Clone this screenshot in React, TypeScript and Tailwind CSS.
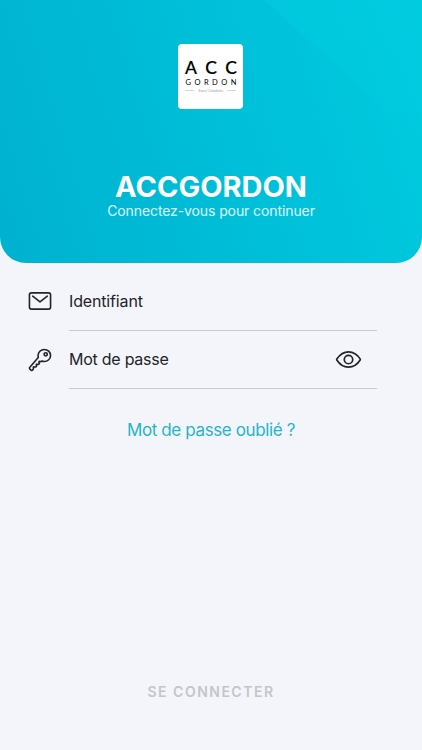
import React from 'react';
import { IoEyeOutline, IoKeyOutline, IoMailOutline } from 'react-icons/io5';

const Logo: React.FC = () => (
  <div className="flex h-[65px] w-[65px] flex-col items-center rounded-[4px] bg-white pt-[13px] text-black">
    <div className="flex h-[22px] w-[52px] items-center justify-between font-['Lato'] text-[17.5px] leading-[22px] font-medium">
      <span className="[-webkit-text-stroke:0.2px_black]">A</span>
      <span className="[-webkit-text-stroke:0.2px_black]">C</span>
      <span className="[-webkit-text-stroke:0.2px_black]">C</span>
    </div>
    <div className="flex w-[51px] justify-between font-['Lato'] text-[7.5px] leading-[8px]">
      {'GORDON'.split('').map((letter, i) => (
        <span key={i}>{letter}</span>
      ))}
    </div>
    <div className="mt-px flex w-[51px] items-center justify-between font-['Lato'] text-[3.8px] leading-[5px] text-gray-400">
      <span className="h-px w-[9px] bg-gray-300" />
      <span>Excel Conduite</span>
      <span className="h-px w-[9px] bg-gray-300" />
    </div>
  </div>
);

const App: React.FC = () => {
  return (
    <div className="flex h-[750px] w-full flex-col bg-[#f3f5fa] font-['Inter',sans-serif] text-[#222428]">
      {/* Header */}
      <header className="relative flex h-[263px] flex-col items-center overflow-hidden rounded-b-[26px] bg-linear-[73deg,#00b1d0,#00cbdf] pt-11">
        <svg className="absolute inset-0 h-full w-full" viewBox="0 0 422 263">
          <defs>
            <linearGradient id="facet" x1="0" y1="0" x2="0" y2="1">
              <stop offset="0" stopColor="#00cce0" stopOpacity="0.5" />
              <stop offset="0.75" stopColor="#00cce0" stopOpacity="0.4" />
              <stop offset="1" stopColor="#00cce0" stopOpacity="0" />
            </linearGradient>
          </defs>
          <path d="M264 0 L386 110 L422 142 V0 Z" fill="url(#facet)" />
        </svg>
        <div className="relative flex flex-col items-center">
          <Logo />
          <h1 className="mt-[61px] text-[29px] leading-[34px] font-bold text-white">ACCGORDON</h1>
          <p className="-mt-px text-[14px] leading-[16px] tracking-[-0.1px] text-white/85">Connectez-vous pour continuer</p>
        </div>
      </header>

      {/* Login form */}
      <main className="flex flex-1 flex-col pr-[45px] pl-[27px]">
        <div className="mt-[10px] flex h-[58px] items-center">
          <IoMailOutline size={26} className="mr-4 mb-[2px] shrink-0" />
          <div className="flex h-full flex-1 items-center border-b border-[#c8cad0] pb-[2px] text-[16px] tracking-[-0.15px]">
            <span>Identifiant</span>
          </div>
        </div>
        <div className="flex h-[58px] items-center">
          <IoKeyOutline size={26} className="mr-4 mb-px shrink-0" />
          <div className="flex h-full flex-1 items-center justify-between border-b border-[#c8cad0] pr-[15px] text-[16px] tracking-[-0.25px]">
            <span className="pb-[2px]">Mot de passe</span>
            <IoEyeOutline size={27} />
          </div>
        </div>
        <a className="mt-[29px] ml-[18px] text-center text-[17px] leading-6 tracking-[-0.38px] text-[#1fb6cc]">Mot de passe oublié ?</a>
      </main>

      <footer className="pb-[50px] text-center text-[14px] leading-4 font-semibold tracking-[1.5px] text-[#c3c5ca]">
        SE CONNECTER
      </footer>
    </div>
  );
};

export default App;
